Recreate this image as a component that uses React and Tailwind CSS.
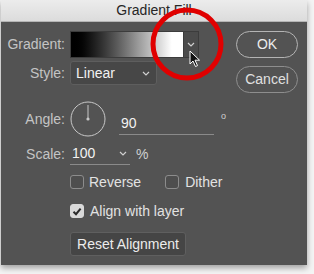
import React from 'react';

const font = { fontFamily: '"Liberation Sans", Arial, sans-serif' };

const Chevron = ({ className = '' }) => (
  <svg width="8" height="5" viewBox="0 0 8 5" className={className}>
    <path d="M1 1 L4 4 L7 1" fill="none" stroke="#d0d0d0" strokeWidth="1.2" />
  </svg>
);

const Check = ({ checked }) => (
  <div
    className={`w-[14px] h-[14px] rounded-[3px] border flex items-center justify-center ${
      checked ? 'bg-[#d9d9d9] border-[#d9d9d9]' : 'bg-[#4e4e4e] border-[#8c8c8c]'
    }`}
  >
    {checked && (
      <svg width="10" height="9" viewBox="0 0 10 9">
        <path d="M1.5 4.8 L4 7.2 L8.6 1.6" fill="none" stroke="#2a2a2a" strokeWidth="2" />
      </svg>
    )}
  </div>
);

const Label = ({ children }) => (
  <div className="w-[64px] text-right text-[14px] text-[#c4c4c4]">{children}</div>
);

export default function App() {
  return (
    <div className="w-[314px] h-[274px] bg-[#f4f4f4] relative overflow-hidden" style={font}>
      <div className="ml-[1px] w-[306px] shadow-[0_3px_6px_rgba(0,0,0,0.35)]">
        {/* title bar */}
        <div className="h-[22px] bg-gradient-to-b from-[#ececec] to-[#dcdcdc] border-b border-[#b5b5b5] flex items-center justify-center text-[14px] text-[#262626]">
          Gradient Fill
        </div>

        {/* body */}
        <div className="h-[243px] bg-[#535353] flex pt-[9px]">
          <div className="flex flex-col w-[229px]">
            {/* gradient */}
            <div className="flex items-center gap-[5px] h-[27px]">
              <Label>Gradient:</Label>
              <div className="flex h-[27px] border border-[#3c3c3c]">
                <div className="w-[112px] h-full bg-gradient-to-r from-black via-[#9a9a9a] via-60% to-white to-90%" />
                <div className="w-[15px] h-full bg-[#4b4b4b] border-l border-[#3c3c3c] flex items-center justify-center">
                  <Chevron />
                </div>
              </div>
            </div>

            {/* style */}
            <div className="flex items-center gap-[5px] h-[24px] mt-[3px]">
              <Label>Style:</Label>
              <div className="w-[87px] h-[24px] rounded-[3px] bg-[#474747] border border-[#5e5e5e] flex items-center justify-between pl-[5px] pr-[6px]">
                <span className="text-[14px] text-[#f2f2f2]">Linear</span>
                <Chevron />
              </div>
            </div>

            {/* angle */}
            <div className="flex items-center gap-[5px] h-[36px] mt-[16px]">
              <Label>Angle:</Label>
              <svg width="36" height="36" viewBox="0 0 36 36">
                <circle cx="18" cy="18" r="17" fill="none" stroke="#c8c8c8" strokeWidth="1" />
                <line x1="18" y1="18" x2="18" y2="4" stroke="#c8c8c8" strokeWidth="1" />
                <circle cx="18" cy="18" r="1.6" fill="#c8c8c8" />
              </svg>
              <div className="ml-[8px] w-[95px] h-[22px] border-b border-[#8a8a8a] mt-[10px] flex items-center">
                <span className="text-[14px] text-[#f2f2f2] pl-[2px]">90</span>
              </div>
              <span className="ml-[2px] text-[9px] text-[#d0d0d0] self-start mt-[9px]">o</span>
            </div>

            {/* scale */}
            <div className="flex items-center gap-[5px] h-[22px] mt-[6px]">
              <Label>Scale:</Label>
              <div className="w-[60px] h-[22px] border-b border-[#8a8a8a] flex items-center justify-between pl-[2px] pr-[3px]">
                <span className="text-[14px] text-[#f2f2f2]">100</span>
                <Chevron />
              </div>
              <span className="ml-[1px] text-[14px] text-[#d0d0d0]">%</span>
            </div>

            {/* checkboxes */}
            <div className="flex items-center h-[16px] mt-[9px] pl-[69px]">
              <Check />
              <span className="ml-[5px] text-[14px] text-[#e2e2e2]">Reverse</span>
              <div className="ml-[24px]">
                <Check />
              </div>
              <span className="ml-[6px] text-[14px] text-[#e2e2e2]">Dither</span>
            </div>

            <div className="flex items-center h-[16px] mt-[13px] pl-[69px]">
              <Check checked />
              <span className="ml-[6px] text-[14px] text-[#e2e2e2]">Align with layer</span>
            </div>

            <div className="pl-[69px] mt-[13px]">
              <div className="w-[116px] h-[24px] rounded-[3px] bg-[#454545] border border-[#5f5f5f] flex items-center justify-center text-[14px] text-[#ececec]">
                Reset Alignment
              </div>
            </div>
          </div>

          {/* buttons */}
          <div className="flex flex-col gap-[8px] ml-[6px]">
            <div className="w-[62px] h-[27px] rounded-full border border-[#b4b4b4] flex items-center justify-center text-[14px] text-[#ececec]">
              OK
            </div>
            <div className="w-[62px] h-[27px] rounded-full border border-[#8e8e8e] flex items-center justify-center text-[14px] text-[#e0e0e0]">
              Cancel
            </div>
          </div>
        </div>
      </div>

      {/* red annotation circle */}
      <svg className="absolute left-[148px] top-[6px]" width="78" height="76" viewBox="0 0 78 76">
        <ellipse cx="39" cy="38" rx="34" ry="34" fill="none" stroke="#e00000" strokeWidth="5" />
      </svg>

      {/* cursor */}
      <svg className="absolute left-[189px] top-[50px]" width="12" height="18" viewBox="0 0 12 18">
        <path d="M1 1 L1 14 L4 11 L6.5 16.5 L8.5 15.6 L6 10.2 L10.5 10.2 Z" fill="#111" stroke="#fff" strokeWidth="1" strokeLinejoin="round" />
      </svg>
    </div>
  );
}
